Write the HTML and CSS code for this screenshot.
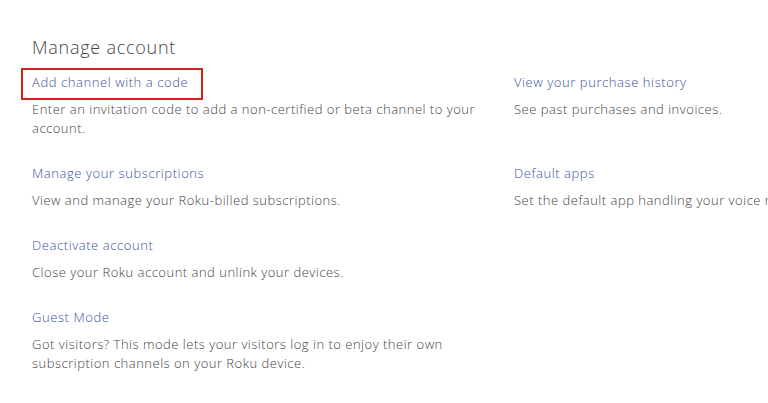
FILE: index.html
```html
<!DOCTYPE html>
<html lang="en">
<head>
    <meta charset="UTF-8">
    <meta name="viewport" content="width=device-width, initial-scale=1.0">
    <title>Manage account</title>
    <link rel="stylesheet" href="styles.css">
</head>
<body>

<div class="page">
    <h1 class="title">Manage account</h1>

    <div class="options">
        <div class="option">
            <a href="#" class="option-link highlighted">Add channel with a code</a>
            <p class="option-desc">Enter an invitation code to add a non-certified or beta channel to your account.</p>
        </div>
        <div class="option">
            <a href="#" class="option-link">View your purchase history</a>
            <p class="option-desc">See past purchases and invoices.</p>
        </div>
        <div class="option">
            <a href="#" class="option-link">Manage your subscriptions</a>
            <p class="option-desc">View and manage your Roku-billed subscriptions.</p>
        </div>
        <div class="option">
            <a href="#" class="option-link">Default apps</a>
            <p class="option-desc nowrap">Set the default app handling your voice requests.</p>
        </div>
        <div class="option">
            <a href="#" class="option-link">Deactivate account</a>
            <p class="option-desc">Close your Roku account and unlink your devices.</p>
        </div>
        <div class="option"></div>
        <div class="option">
            <a href="#" class="option-link">Guest Mode</a>
            <p class="option-desc">Got visitors? This mode lets your visitors log in to enjoy their own subscription channels on your Roku device.</p>
        </div>
    </div>
</div>

</body>
</html>
```

FILE: styles.css
```css
html, body {
    margin: 0;
    background: #fff;
    overflow: hidden;
}
body {
    font-family: "Open Sans", Arial, sans-serif;
    width: 768px;
    height: 403px;
}
.page {
    padding: 34px 0 0 32px;
    width: 1000px;
}
.title {
    font-size: 18px;
    font-weight: 300;
    letter-spacing: 0.75px;
    color: #444;
    margin: 0 0 10px;
    line-height: 26px;
}
.options {
    display: grid;
    grid-template-columns: 482px 482px;
}
.option {
    padding-bottom: 23px;
}
.option-link {
    display: inline-block;
    position: relative;
    font-size: 13px;
    font-weight: 300;
    line-height: 19px;
    letter-spacing: 0.58px;
    color: #3a52a0;
    text-decoration: none;
    margin-bottom: 8px;
}
.highlighted::after {
    content: "";
    position: absolute;
    left: -11px;
    right: -15px;
    top: -5px;
    bottom: -8px;
    border: 2px solid #d42020;
}
.option-desc {
    margin: 0;
    font-size: 13px;
    font-weight: 300;
    line-height: 19px;
    letter-spacing: 0.5px;
    color: #444;
    max-width: 450px;
}
.nowrap {
    white-space: nowrap;
}
```
